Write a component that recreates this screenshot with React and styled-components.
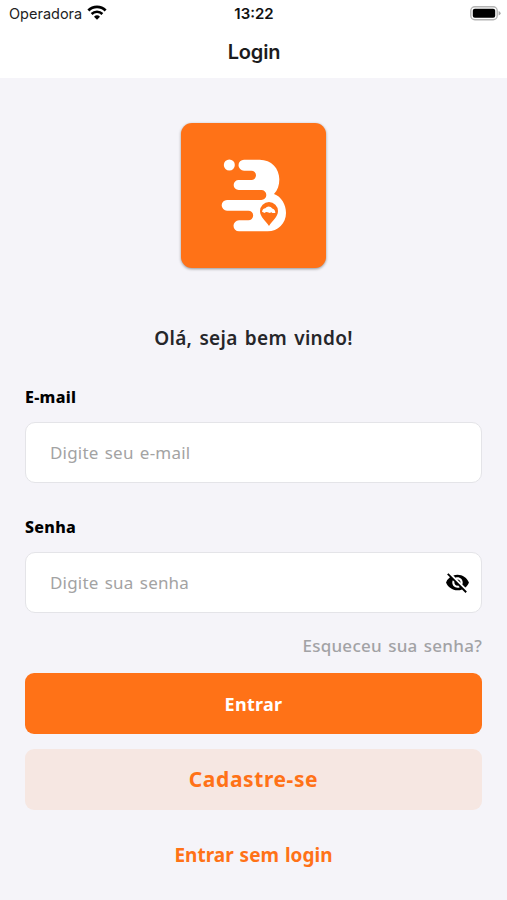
import { useState } from 'react'
import styled, { createGlobalStyle } from 'styled-components'
import { MdVisibility, MdVisibilityOff } from 'react-icons/md'

function StatusBar() {
  return (
    <StyledStatus>
      <Carrier>
        <span>Operadora</span>
        <svg width="20" height="15" viewBox="0 0 20 15">
          <path d="M1.4 5.6 A12 12 0 0 1 18.6 5.6" fill="none" stroke="#000" strokeWidth="2.8" />
          <path d="M4.6 9 A7.6 7.6 0 0 1 15.4 9" fill="none" stroke="#000" strokeWidth="2.5" />
          <path d="M10 14.8 L7 11.7 A4.3 4.3 0 0 1 13 11.7 Z" />
        </svg>
      </Carrier>
      <Clock>13:22</Clock>
      <Battery>
        <svg width="31" height="15" viewBox="0 0 31 15">
          <rect x="0.8" y="0.8" width="26.4" height="13" rx="4" fill="#fff" stroke="#b4b4b4" strokeWidth="1.4" />
          <rect x="2.8" y="2.8" width="22.4" height="9" rx="2" />
          <path d="M28.6 5 Q30.6 5.8 30.6 7.3 Q30.6 8.8 28.6 9.6 Z" fill="#a6a6a6" />
        </svg>
      </Battery>
    </StyledStatus>
  )
}

function Logo() {
  return (
    <Tile>
      <svg width="90" height="90" viewBox="-2 1 270 270">
        <circle cx="59" cy="43" r="16.5" fill="#fff" />
        <path
          fill="#fff"
          d="M103 27 H150 C185 27 209 53 209 86 C209 104 204 119 193 130
             C215 138 229 161 229 187 C229 218 205 242 174 242 H88
             A16.5 16.5 0 0 1 88 209 H116 A14.5 14.5 0 0 0 116 180 H52
             A16 16 0 0 1 52 148 H155 A15 15 0 0 0 155 118 H87
             A15 15 0 0 1 87 88 H125 A14 14 0 0 0 125 60 H103 A16.5 16.5 0 0 1 103 27 Z"
        />
        <path fill="#ff7217" d="M178 226 C168 210 151 199 151 181 A27 27 0 0 1 205 181 C205 199 188 210 178 226 Z" />
        <path fill="#fff" d="M157 183 Q160 173 167 173 Q173 165 183 169 L189 174 Q197 176 197 187 L188 187 Q185 182 181 187 L174 185 Q169 182 165 187 Z" />
      </svg>
    </Tile>
  )
}

function App() {
  const [hidden, setHidden] = useState(true)

  return (
    <Screen>
      <GlobalStyle />
      <Header>
        <StatusBar />
        <Title>Login</Title>
      </Header>
      <Content>
        <Logo />
        <Welcome>Olá, seja bem vindo!</Welcome>
        <Label htmlFor="email">E-mail</Label>
        <Field>
          <Input id="email" type="email" placeholder="Digite seu e-mail" />
        </Field>
        <Label htmlFor="senha">Senha</Label>
        <Field>
          <Input id="senha" type={hidden ? 'password' : 'text'} placeholder="Digite sua senha" />
          <EyeButton type="button" onClick={() => setHidden(!hidden)}>
            {hidden ? <MdVisibilityOff size={25} /> : <MdVisibility size={25} />}
          </EyeButton>
        </Field>
        <Forgot>Esqueceu sua senha?</Forgot>
        <Button>Entrar</Button>
        <SoftButton>Cadastre-se</SoftButton>
        <TextButton>Entrar sem login</TextButton>
      </Content>
    </Screen>
  )
}

export default App

const GlobalStyle = createGlobalStyle`
  * {
    box-sizing: border-box;
  }
  body {
    margin: 0;
    background-color: #f5f4f9;
  }
`;

const Screen = styled.div`
  display: flex;
  flex-direction: column;
  height: 900px;
  background-color: #f5f4f9;
  font-family: "Noto Sans", sans-serif;
  overflow: hidden;
`;

const Header = styled.header`
  display: flex;
  flex-direction: column;
  height: 78px;
  background-color: #fff;
  font-family: Inter, sans-serif;
`;

const StyledStatus = styled.div`
  display: grid;
  grid-template-columns: 1fr auto 1fr;
  align-items: center;
  height: 27px;
  padding: 0 6px 0 9px;
  font-size: 14.5px;
`;

const Carrier = styled.div`
  display: flex;
  align-items: center;
  gap: 5px;
  color: #222;
  svg {
    margin-top: -2px;
  }
`;

const Clock = styled.div`
  margin-left: -2px;
  font-size: 15px;
  font-weight: 600;
  color: #111;
`;

const Battery = styled.div`
  display: flex;
  justify-content: flex-end;
`;

const Title = styled.h1`
  margin: 0;
  padding-left: 1px;
  font-size: 20px;
  font-weight: 600;
  line-height: 51px;
  letter-spacing: -0.2px;
  text-align: center;
  color: #1b1b1d;
`;

const Content = styled.main`
  display: flex;
  flex-direction: column;
  padding: 45px 25px 0;
`;

const Tile = styled.div`
  display: flex;
  align-items: center;
  justify-content: center;
  align-self: center;
  width: 145px;
  height: 145px;
  border-radius: 11px;
  background-color: #ff7217;
  box-shadow: 0 1px 3px rgba(0, 0, 0, 0.4);
`;

const Welcome = styled.h2`
  margin: 55px 0 0;
  font-size: 19px;
  font-weight: 600;
  line-height: 30px;
  letter-spacing: 0.3px;
  word-spacing: 2px;
  text-align: center;
  color: #26262a;
`;

const Label = styled.label`
  margin-top: 31px;
  margin-bottom: 11px;
  font-size: 16px;
  font-weight: 800;
  line-height: 27px;
  letter-spacing: 0.3px;
  color: #000;
`;

const Field = styled.div`
  display: flex;
  align-items: center;
  height: 61px;
  padding: 0 11px 0 24px;
  border: 1px solid #e4e4e8;
  border-radius: 10px;
  background-color: #fff;
`;

const Input = styled.input`
  flex: 1;
  min-width: 0;
  padding: 0;
  border: none;
  outline: none;
  background: none;
  font-family: inherit;
  font-size: 17px;
  letter-spacing: 0.2px;
  word-spacing: 1.6px;
  color: #000;
  &::placeholder {
    color: #a3a3a3;
    opacity: 1;
  }
`;

const EyeButton = styled.button`
  display: flex;
  padding: 0;
  border: none;
  background: none;
  color: #000;
  cursor: pointer;
`;

const Forgot = styled.a`
  align-self: flex-end;
  margin: 19px 0 14px;
  font-size: 17px;
  font-weight: 500;
  line-height: 27px;
  letter-spacing: 0.25px;
  word-spacing: 1.6px;
  color: #a2a2a5;
  cursor: pointer;
`;

const Button = styled.button`
  height: 61px;
  padding: 0;
  border: none;
  border-radius: 9px;
  background-color: #ff7217;
  font-family: inherit;
  font-size: 18px;
  font-weight: 700;
  letter-spacing: 0.3px;
  color: #fff;
  cursor: pointer;
`;

const SoftButton = styled(Button)`
  margin-top: 15px;
  padding-bottom: 1px;
  background-color: #f6e7e2;
  font-size: 21px;
  letter-spacing: 0.6px;
  color: #ff7217;
`;

const TextButton = styled(Button)`
  align-self: center;
  margin-top: 15px;
  padding-bottom: 1px;
  background: none;
  font-size: 19px;
  letter-spacing: 0;
  word-spacing: 1px;
  color: #ff7217;
`;
